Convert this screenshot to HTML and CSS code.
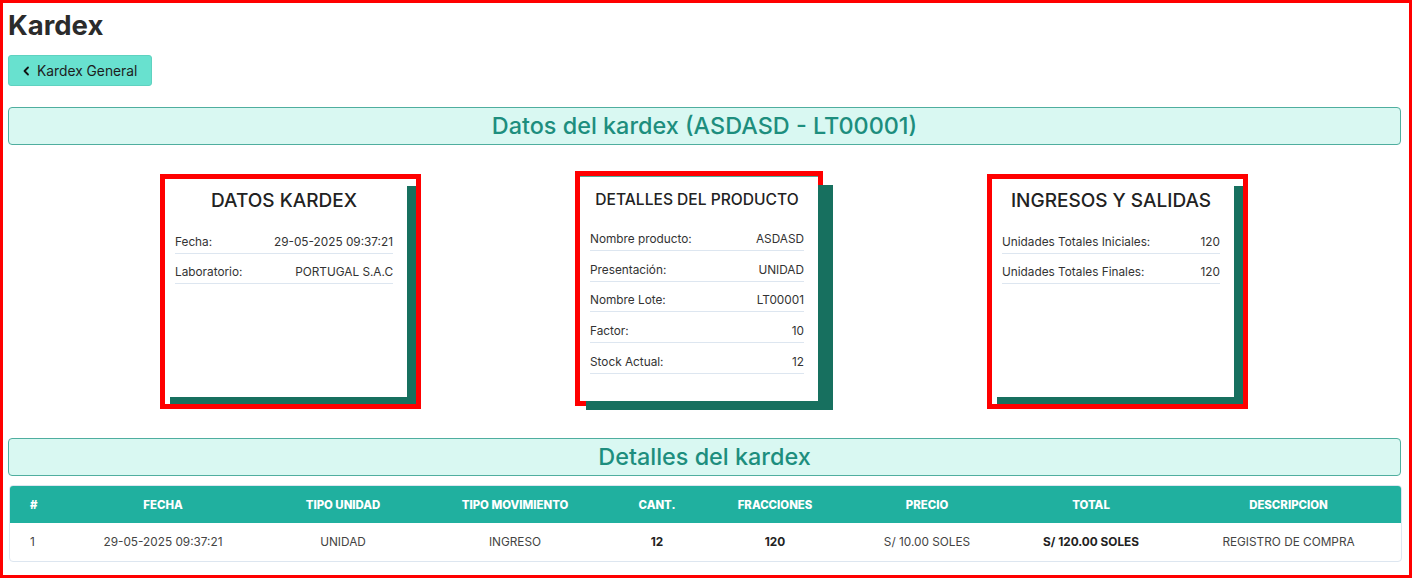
FILE: index.html
```html
<!DOCTYPE html>
<html lang="es">
<head>
    <meta charset="UTF-8">
    <title>Kardex</title>
    <link rel="stylesheet" href="styles.css">
</head>
<body>
    <div class="page">
        <!-- Titulo -->
        <h1 class="page-title">Kardex</h1>

        <button class="back-btn" type="button">
            <svg width="9" height="10" viewBox="0 0 9 10"><polyline points="6,1.5 2.5,5 6,8.5" fill="none" stroke="#111" stroke-width="1.8" stroke-linecap="round" stroke-linejoin="round"/></svg>
            Kardex General
        </button>

        <div class="section-bar">Datos del kardex (ASDASD - LT00001)</div>

        <!-- Tarjetas -->
        <div class="cards">
            <div class="card-frame">
                <div class="card">
                    <h2 class="card-title">DATOS KARDEX</h2>
                    <div class="row"><span>Fecha:</span><span>29-05-2025 09:37:21</span></div>
                    <div class="row"><span>Laboratorio:</span><span>PORTUGAL S.A.C</span></div>
                </div>
            </div>

            <div class="card-frame product">
                <div class="card">
                    <h2 class="card-title">DETALLES DEL PRODUCTO</h2>
                    <div class="row"><span>Nombre producto:</span><span>ASDASD</span></div>
                    <div class="row"><span>Presentación:</span><span>UNIDAD</span></div>
                    <div class="row"><span>Nombre Lote:</span><span>LT00001</span></div>
                    <div class="row"><span>Factor:</span><span>10</span></div>
                    <div class="row"><span>Stock Actual:</span><span>12</span></div>
                </div>
            </div>

            <div class="card-frame">
                <div class="card">
                    <h2 class="card-title">INGRESOS Y SALIDAS</h2>
                    <div class="row"><span>Unidades Totales Iniciales:</span><span>120</span></div>
                    <div class="row"><span>Unidades Totales Finales:</span><span>120</span></div>
                </div>
            </div>
        </div>

        <div class="section-bar">Detalles del kardex</div>

        <!-- Tabla de movimientos -->
        <table class="kardex-table">
            <colgroup>
                <col style="width:48px"><col style="width:210px"><col style="width:150px">
                <col style="width:194px"><col style="width:90px"><col style="width:146px">
                <col style="width:158px"><col style="width:170px"><col style="width:225px">
            </colgroup>
            <thead>
                <tr>
                    <th>#</th>
                    <th>FECHA</th>
                    <th>TIPO UNIDAD</th>
                    <th>TIPO MOVIMIENTO</th>
                    <th>CANT.</th>
                    <th>FRACCIONES</th>
                    <th>PRECIO</th>
                    <th>TOTAL</th>
                    <th>DESCRIPCION</th>
                </tr>
            </thead>
            <tbody>
                <tr>
                    <td>1</td>
                    <td>29-05-2025 09:37:21</td>
                    <td>UNIDAD</td>
                    <td>INGRESO</td>
                    <td class="strong">12</td>
                    <td class="strong">120</td>
                    <td>S/ 10.00 SOLES</td>
                    <td class="strong">S/ 120.00 SOLES</td>
                    <td>REGISTRO DE COMPRA</td>
                </tr>
            </tbody>
        </table>
    </div>
</body>
</html>
```

FILE: styles.css
```css
/* General */
* {
    box-sizing: border-box;
}

body {
    margin: 0;
    font-family: 'Inter', 'Noto Sans', sans-serif;
    color: #333;
    background: #fff;
}

.page {
    border: 3px solid #ff0000;
    height: 578px;
    padding: 5px 8px 0 5px;
}

.page-title {
    margin: 0;
    padding-top: 1px;
    font-size: 27.5px;
    font-weight: 700;
    line-height: 33px;
    color: #2b2b2b;
}

.back-btn {
    display: flex;
    align-items: center;
    gap: 6px;
    margin-top: 13px;
    width: 144px;
    height: 31px;
    padding: 0 0 0 13px;
    background-color: #68e1cf;
    border: 1px solid #5fd2c0;
    border-radius: 3px;
    font-family: inherit;
    font-size: 13.8px;
    color: #1d1d1d;
}

.section-bar {
    margin-top: 21px;
    height: 38px;
    line-height: 35px;
    text-align: center;
    background-color: #d9f8f2;
    border: 1px solid #4fae9f;
    border-radius: 4px;
    font-size: 23.4px;
    font-weight: 500;
    color: #1d8e7e;
}

/* Cards */
.cards {
    display: flex;
    justify-content: space-between;
    align-items: flex-start;
    padding: 29px 153px 0 152px;
    height: 272px;
}

.card-frame {
    border: 5px solid #ff0000;
    padding: 0 9px 7px 0;
}

.card {
    width: 242px;
    height: 218px;
    background: #fff;
    box-shadow: 9px 7px 0 #17705f, 5px 7px 0 #17705f;
    padding: 11px 14px 0 10px;
}

.card-title {
    margin: 0 0 19px 0;
    text-align: center;
    font-size: 19px;
    font-weight: 500;
    line-height: 22px;
    color: #222;
}

.row {
    display: flex;
    justify-content: space-between;
    font-size: 11.8px;
    line-height: 16px;
    padding: 3px 0;
    margin-bottom: 7px;
    border-bottom: 1px solid #dde6f0;
    color: #333;
}

.card-frame.product {
    margin-top: -3px;
    margin-left: -5px;
    margin-right: 5px;
    padding: 0;
}

.card-frame.product .card {
    width: 238px;
    height: 225px;
    box-shadow: 15px 9px 0 #17705f, 6px 9px 0 #17705f;
    border-top: 1px solid #4fae9f;
    padding-top: 12px;
}

.card-frame.product .card-title {
    font-size: 15.6px;
    margin-bottom: 17px;
}

.card-frame.product .row {
    margin-bottom: 7.7px;
}

/* Tabla */
.kardex-table {
    margin-top: 9px;
    margin-left: 1px;
    width: 1391px;
    table-layout: fixed;
    border-collapse: separate;
    border-spacing: 0;
    border: 1px solid #dde6f0;
    border-radius: 4px;
    overflow: hidden;
}

.kardex-table th {
    background-color: #20b09f;
    color: #fff;
    font-size: 11.4px;
    font-weight: 800;
    height: 37px;
    text-align: center;
}

.kardex-table td {
    height: 38px;
    text-align: center;
    font-size: 11.8px;
    color: #444;
}

.kardex-table th:first-child,
.kardex-table td:first-child {
    text-align: left;
    padding-left: 20px;
}

.kardex-table td.strong {
    font-weight: 700;
    color: #222;
}
```
